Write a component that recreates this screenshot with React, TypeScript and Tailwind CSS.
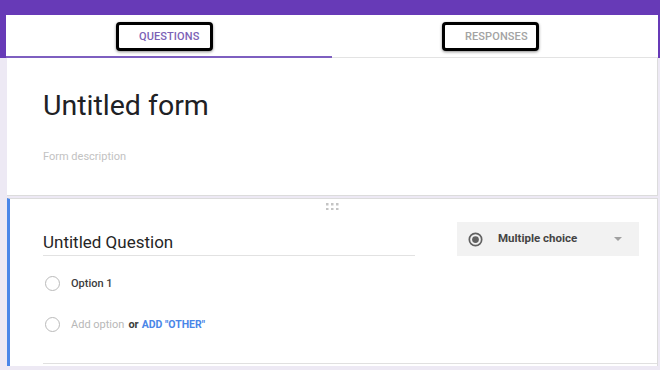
import React from 'react';

function GripDots() {
  return (
    <svg width="14" height="8" viewBox="0 0 14 8" fill="#c4c4c4">
      {[0, 5, 10].map(x =>
        [0, 5].map(y => <rect key={`${x}-${y}`} x={x + 1} y={y + 1} width="2.5" height="2.5" />)
      )}
    </svg>
  );
}

function RadioFilledIcon() {
  return (
    <svg width="15" height="15" viewBox="0 0 16 16">
      <circle cx="8" cy="8" r="6.6" fill="none" stroke="#616161" strokeWidth="1.8" />
      <circle cx="8" cy="8" r="3.6" fill="#616161" />
    </svg>
  );
}

function Tab({ label, active }: { label: string; active?: boolean }) {
  return (
    <div className="flex-1 flex items-center justify-center pr-[9px]">
      <div className="w-[97px] h-[29px] border-[3px] border-black rounded-[4px] shadow-[0_1px_3px_rgba(0,0,0,0.45)] flex items-center pl-[20px] bg-white">
        <span className={`text-[11px] font-medium leading-none tracking-[0.1px] ${active ? 'text-[#7c62b6]' : 'text-[#a3a3a3]'}`}>
          {label}
        </span>
      </div>
    </div>
  );
}

function OptionRow({ children }: { children: React.ReactNode }) {
  return (
    <div className="h-[41px] flex items-center pl-[2px]">
      <span className="w-[15px] h-[15px] rounded-full border-[1.5px] border-[#bababa] shrink-0" />
      <div className="ml-[11px] text-[11px] leading-none">{children}</div>
    </div>
  );
}

export default function App() {
  return (
    <div className="w-[660px] h-[370px] overflow-hidden bg-[#ede9f4]" style={{ fontFamily: 'Roboto, "Noto Sans", Arial, sans-serif' }}>
      {/* top bar with tabs */}
      <div className="bg-[#673ab7] pt-[15px] pl-[6px] pr-[2px]">
        <div className="relative bg-white h-[43px] flex border-b border-[#e3e3e3]">
          <Tab label="QUESTIONS" active />
          <Tab label="RESPONSES" />
          <div className="absolute left-0 bottom-[-1px] w-1/2 h-[2px] bg-[#7e5fc0]" />
        </div>
      </div>

      <div className="pl-[7px] pr-[2px]">
        {/* form header card */}
        <div className="bg-white h-[138px] border-r border-b border-[#dcdcdc] pl-[36px] pt-[34px]">
          <div className="text-[28.5px] leading-none text-[#202124]">Untitled form</div>
          <div className="mt-[30px] text-[11px] leading-none text-[#c2c2c2]">Form description</div>
        </div>

        {/* question card */}
        <div className="mt-[2px] bg-white border-l-[3px] border-l-[#4a86e8] border-t border-r border-[#dcdcdc] pt-[3px]">
          <div className="flex justify-center h-[8px] pr-[3px]">
            <GripDots />
          </div>
          <div className="mt-[12px] flex items-start justify-between pl-[33px] pr-[18px]">
            <div className="w-[372px] mt-[12px] pb-[4px] border-b border-[#e2e2e2]">
              <div className="text-[17px] leading-none text-[#262626]">Untitled Question</div>
            </div>
            <div className="w-[182px] h-[34px] bg-[#f2f2f2] flex items-center pl-[11px] pr-[17px]">
              <RadioFilledIcon />
              <span className="ml-[15px] text-[11.5px] font-bold text-[#444] leading-none">Multiple choice</span>
              <span className="ml-auto w-0 h-0 border-l-[4px] border-r-[4px] border-t-[4px] border-l-transparent border-r-transparent border-t-[#a0a0a0]" />
            </div>
          </div>
          <div className="mt-[7px] pl-[33px]">
            <OptionRow>
              <span className="font-medium text-[#3c3c3c]">Option 1</span>
            </OptionRow>
            <OptionRow>
              <span className="text-[#b8b8b8]">Add option</span>
              <span className="ml-[4px] font-bold text-[#3c3c3c]">or</span>
              <span className="ml-[3px] text-[10.5px] font-bold text-[#4a86e8]">ADD "OTHER"</span>
            </OptionRow>
          </div>
          <div className="h-[18px]" />
          <div className="ml-[33px] border-t border-[#e0e0e0] h-[3px]" />
        </div>
      </div>
    </div>
  );
}
